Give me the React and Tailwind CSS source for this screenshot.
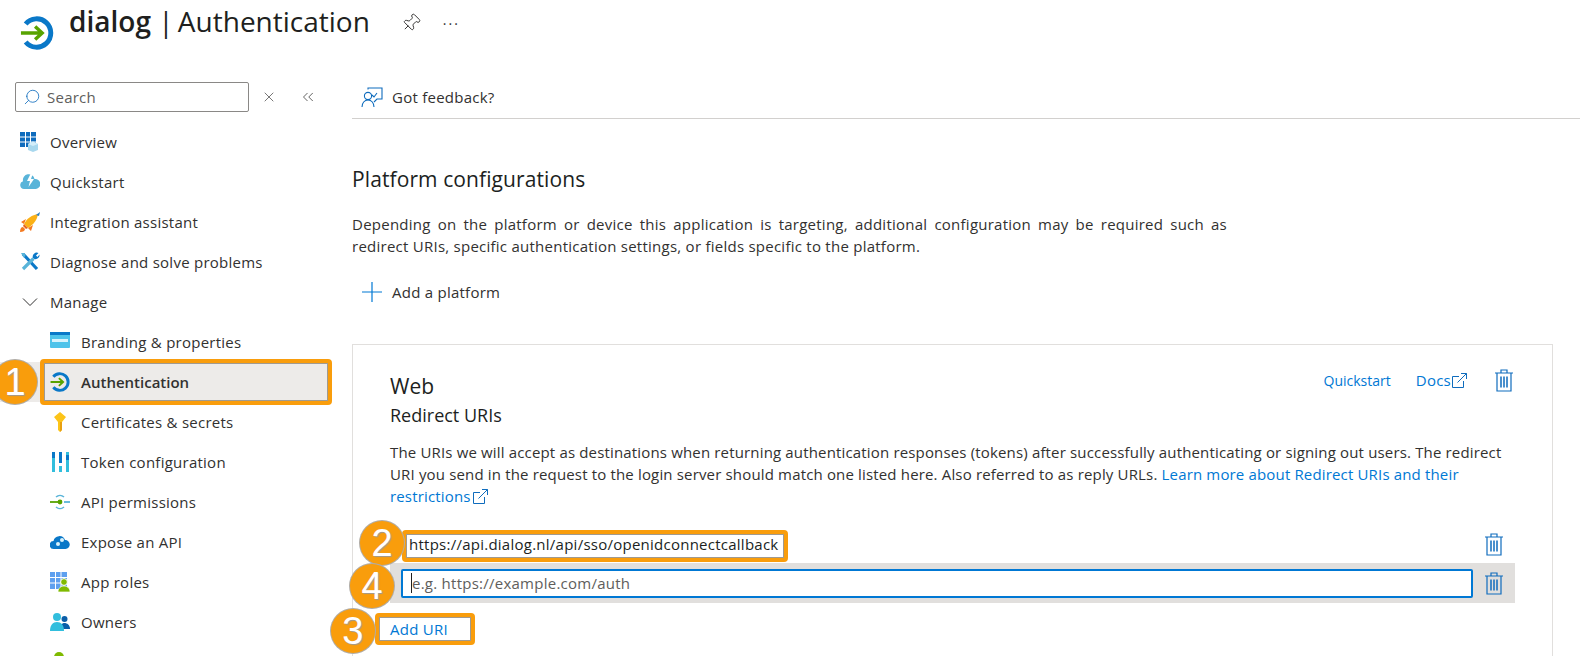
import { Search, X, ChevronsLeft, Pin } from "lucide-react";

const font = "font-['Open_Sans','Noto_Sans',sans-serif]";

function DialogLogo({ size = 34 }) {
    return (
        <svg width={size} height={size} viewBox="0 0 36 36" fill="none">
            <path d="M6 8.500A15 15 0 1 1 6 27.500" stroke="#0a78c8" strokeWidth="5.200" />
            <path d="M1 18H23M16 11l7.500 7-7.500 7" stroke="#57a300" strokeWidth="3.600" />
        </svg>
    );
}

function OverviewIcon() {
    return (
        <svg width="20" height="20" viewBox="0 0 20 20">
            <rect x="0" y="0" width="16" height="15" fill="#0f6cbd" />
            <path d="M5.500 0v15M10.500 0v15M0 5h16M0 10h16" stroke="#fff" strokeWidth="1" />
            <path d="M8 12l5-2.500 5 2.500v6l-5 2-5-2z" fill="#a8d8ee" />
            <path d="M8 12l5 2 5-2-5-2.500z" fill="#d3eefa" />
        </svg>
    );
}

function QuickstartIcon() {
    return (
        <svg width="20" height="20" viewBox="0 0 20 20">
            <path d="M4 17a4 4 0 0 1-1-7.800A5.500 5.500 0 0 1 14.500 7 5 5 0 0 1 16 17z" fill="#59b4d9" />
            <path d="M11 1L7 9h3L8.500 15 14 7h-3l2-6z" fill="#fff" />
        </svg>
    );
}

function RocketIcon() {
    return (
        <svg width="20" height="20" viewBox="0 0 20 20">
            <path d="M6 7L1 10l3 2zM13 13l-2 6-3-3z" fill="#f47a20" />
            <path d="M4 12C7 6 12 3 18 2c-1 6-4 10-10 14z" fill="#fbb116" />
            <path d="M4 12l4 4-2 1-3-3z" fill="#e8641b" />
            <path d="M16 3l4-3-1 4z" fill="#2d7fc1" />
            <path d="M0 20c0-3 1-5 3-5l2 2c0 2-2 3-5 3z" fill="#f47a20" />
        </svg>
    );
}

function ToolsIcon() {
    return (
        <svg width="20" height="20" viewBox="0 0 20 20" fill="none">
            <path d="M3 2l14 15" stroke="#0a78c8" strokeWidth="3.200" />
            <path d="M1 1l3.500 0 1 3-2 1.500z" fill="#59b4d9" />
            <path d="M3 17L13.500 6.500" stroke="#59b4d9" strokeWidth="3.200" />
            <path d="M13 6a4 4 0 0 1 5.500-5L16 3.500 17.500 5 19.500 2.500A4 4 0 0 1 14.500 7z" fill="#0a78c8" />
        </svg>
    );
}

function BrandingIcon() {
    return (
        <svg width="20" height="20" viewBox="0 0 20 20">
            <rect y="0" width="20" height="16" rx="1" fill="#4fc3ea" />
            <rect y="0" width="20" height="3" fill="#0a78c8" />
            <rect x="2" y="7" width="16" height="3" fill="#d8f3fc" />
        </svg>
    );
}

function KeyIcon() {
    return (
        <svg width="20" height="20" viewBox="0 0 20 20">
            <path d="M10 0l6 5-4 5v8l-2 2-2-2v-8L4 5z" fill="#fcc419" />
            <path d="M10 10v10l2-2v-8z" fill="#e8a010" />
        </svg>
    );
}

function TokenIcon() {
    return (
        <svg width="20" height="20" viewBox="0 0 20 20">
            <rect x="2" width="3" height="20" fill="#32bedd" />
            <rect x="2" width="3" height="6" fill="#0a78c8" />
            <rect x="9" width="3" height="11" fill="#0a78c8" />
            <rect x="9" y="14" width="3" height="6" fill="#32bedd" />
            <rect x="16" width="3" height="20" fill="#32bedd" />
            <rect x="16" y="3" width="3" height="5" fill="#0a78c8" />
        </svg>
    );
}

function ApiIcon() {
    return (
        <svg width="20" height="20" viewBox="0 0 20 20" fill="none">
            <path d="M6 5a6 6 0 0 1 8 0M6 15a6 6 0 0 0 8 0" stroke="#59b4d9" strokeWidth="1.500" />
            <path d="M0 10h9" stroke="#57a300" strokeWidth="1.800" />
            <circle cx="10" cy="10" r="2.400" fill="#57a300" />
            <path d="M14 10h6" stroke="#59b4d9" strokeWidth="1.800" />
        </svg>
    );
}

function CloudIcon() {
    return (
        <svg width="20" height="20" viewBox="0 0 20 20">
            <path d="M4 17a4 4 0 0 1-.500-8A6 6 0 0 1 15 8a4.500 4.500 0 0 1 .500 9z" fill="#0a78c8" />
            <circle cx="8" cy="12" r="2" fill="#d8f3fc" />
            <circle cx="12" cy="8" r="2" fill="#d8f3fc" />
        </svg>
    );
}

function RolesIcon() {
    return (
        <svg width="20" height="20" viewBox="0 0 20 20">
            <rect width="17" height="17" fill="#5ea0ef" />
            <path d="M5.500 0v17M11 0v17M0 5.500h17M0 11h17" stroke="#fff" strokeWidth="1" />
            <circle cx="14" cy="10" r="3.400" fill="#7fba00" stroke="#fff" />
            <path d="M8 20c0-4 3-6 6-6s6 2 6 6z" fill="#7fba00" stroke="#fff" strokeWidth=".700" />
        </svg>
    );
}

function OwnersIcon() {
    return (
        <svg width="20" height="20" viewBox="0 0 20 20">
            <circle cx="14.500" cy="7" r="3" fill="#0a5ea8" />
            <path d="M10 17c0-4 2-6 4.500-6s5.500 2 5.500 6z" fill="#0a5ea8" />
            <circle cx="7" cy="5" r="4" fill="#32bedd" />
            <path d="M0 19c0-6 3-9 7-9s7 3 7 9z" fill="#32bedd" />
        </svg>
    );
}

function AdminIcon() {
    return (
        <svg width="20" height="20" viewBox="0 0 20 20">
            <circle cx="9" cy="5" r="5" fill="#7fba00" />
            <path d="M1 20c0-6 3-9 8-9s8 3 8 9z" fill="#7fba00" />
        </svg>
    );
}

function ChevronIcon() {
    return (
        <svg width="16" height="10" viewBox="0 0 16 10" fill="none" stroke="#323130" strokeWidth="1">
            <path d="M1 1.500l7 7 7-7" />
        </svg>
    );
}

function FeedbackIcon() {
    return (
        <svg width="22" height="22" viewBox="0 0 22 22" fill="none" stroke="#0f6cbd" strokeWidth="1.100">
            <path d="M7 2.500V1h14v11h-5l-3 3" />
            <circle cx="7" cy="9" r="3.600" />
            <path d="M1 20c0-4 2.500-7 6-7s6 3 6 7" />
            <path d="M11 8l2 2 3-4" />
        </svg>
    );
}

function ExternalIcon() {
    return (
        <svg width="17" height="17" viewBox="0 0 17 17" fill="none" stroke="#0f6cbd" strokeWidth="1" className="inline-block shrink-0">
            <path d="M8 4.500H1.500v11h11V9" />
            <path d="M6.500 10.500L15.500 1.500M10 1.500h5.500V7" />
        </svg>
    );
}

function TrashIcon() {
    return (
        <svg width="18" height="23" viewBox="0 0 18 23" fill="none" stroke="#0f6cbd" strokeWidth="1.200">
            <path d="M0 4h18M6 4V1h6v3" />
            <path d="M2 4v18h14V4" />
            <path d="M6 7.500v11M9 7.500v11M12 7.500v11" strokeWidth="1.500" />
        </svg>
    );
}

function Badge({ n, className }) {
    return (
        <div className={`absolute z-20 flex h-[44px] w-[44px] items-center justify-center rounded-full bg-[#f99d0c] text-[38px] leading-none text-white shadow-[0_0_0_1px_#b0aca6] [text-shadow:1px_1px_1px_#a09a90] font-['Liberation_Sans',sans-serif] ${className}`}>
            {n}
        </div>
    );
}

const topItems = [
    { label: "Overview", icon: <OverviewIcon /> },
    { label: "Quickstart", icon: <QuickstartIcon /> },
    { label: "Integration assistant", icon: <RocketIcon /> },
    { label: "Diagnose and solve problems", icon: <ToolsIcon /> },
    { label: "Manage", icon: <span className="pl-[2px]"><ChevronIcon /></span> },
];

const manageItems = [
    { label: "Branding & properties", icon: <BrandingIcon /> },
    { label: "Authentication", icon: <DialogLogo size={20} />, active: true },
    { label: "Certificates & secrets", icon: <KeyIcon /> },
    { label: "Token configuration", icon: <TokenIcon /> },
    { label: "API permissions", icon: <ApiIcon /> },
    { label: "Expose an API", icon: <CloudIcon /> },
    { label: "App roles", icon: <RolesIcon /> },
    { label: "Owners", icon: <OwnersIcon /> },
    { label: "", icon: <AdminIcon /> },
];

const body = "text-[15px] tracking-[0.25px]";
const para = "text-[15px] tracking-[0.16px] leading-[22px] text-[#323130]";
const callout = "rounded-[4px] border-[4px] border-[#f99d0c] shadow-[inset_0_0_0_1px_#a09a90]";

function Sidebar() {
    return (
        <aside className="w-[352px] shrink-0">
            <div className="flex items-center pl-[15px]">
                <div className="flex h-[30px] w-[234px] items-center gap-[6px] rounded-[2px] border border-[#8a8886] pl-[7px]">
                    <Search size={18} strokeWidth={1.1} color="#0f6cbd" className="-scale-x-100" />
                    <span className={`${body} text-[#605e5c]`}>Search</span>
                </div>
                <X size={16} strokeWidth={1} color="#323130" className="ml-[12px]" />
                <ChevronsLeft size={18} strokeWidth={1} color="#323130" className="ml-[22px]" />
            </div>
            <nav className="mt-[10px]">
                {topItems.map((item) => (
                    <div key={item.label} className="flex h-[40px] items-center pl-[20px]">
                        <span className="flex w-[30px] shrink-0">{item.icon}</span>
                        <span className={`${body} text-[#323130]`}>{item.label}</span>
                    </div>
                ))}
                {manageItems.map((item) =>
                    item.active ? (
                        <div key={item.label} className="relative flex h-[40px] w-[331px] items-center bg-[#edebe9] pl-[50px]">
                            <div className={`absolute inset-y-[-3px] left-[40px] right-[-1px] ${callout}`} />
                            <span className="flex w-[31px] shrink-0">{item.icon}</span>
                            <span className="text-[15px] font-semibold text-[#323130]">{item.label}</span>
                            <Badge n="1" className="-left-[7px] top-[-2px]" />
                        </div>
                    ) : (
                        <div key={item.label} className="flex h-[40px] items-center pl-[50px]">
                            <span className="flex w-[31px] shrink-0">{item.icon}</span>
                            <span className={`${body} text-[#323130]`}>{item.label}</span>
                        </div>
                    )
                )}
            </nav>
        </aside>
    );
}

function RedirectCard() {
    return (
        <section className="mt-[40px] mr-[27px] h-[400px] border border-[#e1dfdd] pl-[37px] pt-[26px]">
            <div className="flex items-start justify-between pr-[39px]">
                <h2 className="text-[21px] leading-[30px] text-[#201f1e]">Web</h2>
                <div className={`-mt-[2px] flex items-center ${body} text-[#0078d4]`}>
                    <span className="text-[14px] tracking-normal">Quickstart</span>
                    <span className="ml-[25px]">Docs</span>
                    <ExternalIcon />
                    <span className="ml-[27px] flex"><TrashIcon /></span>
                </div>
            </div>
            <h3 className="mt-[2px] text-[18px] leading-[24px] text-[#201f1e]">Redirect URIs</h3>
            <p className={`mt-[14px] h-[66px] w-[1118px] ${para}`}>
                The URIs we will accept as destinations when returning authentication responses (tokens) after successfully authenticating or signing out users. The redirect URI you send in the request to the login server should match one listed here. Also referred to as reply URLs.{" "}
                <span className="text-[#0078d4]">
                    Learn more about Redirect URIs and their restrictions
                    <span className="ml-[1px] inline-flex align-[-3px]"><ExternalIcon /></span>
                </span>
            </p>
            <div className="relative mt-[23px] flex h-[32px] items-center justify-between pr-[49px]">
                <div className={`ml-[12px] flex h-[32px] w-[386px] items-center pb-[3px] pl-[3px] ${callout} ${body} text-[#201f1e]`}>
                    https://api.dialog.nl/api/sso/openidconnectcallback
                </div>
                <span className="mb-[4px] flex"><TrashIcon /></span>
                <Badge n="2" className="left-[-30px] top-[-9px]" />
            </div>
            <div className="relative mt-[1px] mr-[37px] flex h-[40px] items-center bg-[#e1dfdd] pl-[11px]">
                <div className={`flex h-[29px] w-[1072px] items-center rounded-[2px] border-2 border-[#0078d4] bg-white pl-[8px] ${body} text-[#605e5c]`}>
                    <span className="h-[20px] w-px bg-[#201f1e]" />
                    e.g. https://example.com/auth
                </div>
                <span className="ml-[12px] flex"><TrashIcon /></span>
                <Badge n="4" className="left-[-40px] top-[1px]" />
            </div>
            <div className={`relative mt-[10px] ml-[-15px] flex h-[32px] w-[100px] items-center pl-[11px] ${callout} ${body} text-[#0078d4]`}>
                Add URI
                <Badge n="3" className="-left-[48px] top-[-8px]" />
            </div>
        </section>
    );
}

export default function App() {
    return (
        <div className={`h-[656px] w-[1580px] overflow-hidden bg-white ${font}`}>
            <header className="flex h-[82px] items-start pl-[20px]">
                <div className="mt-[16px]"><DialogLogo /></div>
                <h1 className="ml-[15px] -mt-[1px] text-[28px] leading-[44px] text-[#201f1e]">
                    <span className="font-semibold">dialog</span> <span className="-mr-[3px]">|</span> Authentication
                </h1>
                <Pin size={20} strokeWidth={1.1} color="#323130" className="ml-[31px] mt-[13px] rotate-45" />
                <span className="ml-[22px] mt-[13px] text-[14px] tracking-[2px] text-[#323130]">···</span>
            </header>
            <div className="flex">
                <Sidebar />
                <main className="flex-1">
                    <div className="flex h-[37px] items-center border-b border-[#d2d0ce] pb-[5px] pl-[9px]">
                        <FeedbackIcon />
                        <span className={`ml-[9px] ${body} text-[#323130]`}>Got feedback?</span>
                    </div>
                    <h2 className="mt-[45px] text-[21px] tracking-[0.1px] leading-[30px] text-[#201f1e]">Platform configurations</h2>
                    <p className={`mt-[19px] w-[875px] text-justify ${body} leading-[22px] text-[#323130]`}>
                        Depending on the platform or device this application is targeting, additional configuration may be required such as redirect URIs, specific authentication settings, or fields specific to the platform.
                    </p>
                    <div className="mt-[23px] flex h-[24px] items-center pl-[9px]">
                        <svg width="22" height="22" viewBox="0 0 22 22" stroke="#0078d4" strokeWidth="1.200"><path d="M11 1v20M1 11h20" /></svg>
                        <span className={`ml-[9px] ${body} text-[#323130]`}>Add a platform</span>
                    </div>
                    <RedirectCard />
                </main>
            </div>
        </div>
    );
}
